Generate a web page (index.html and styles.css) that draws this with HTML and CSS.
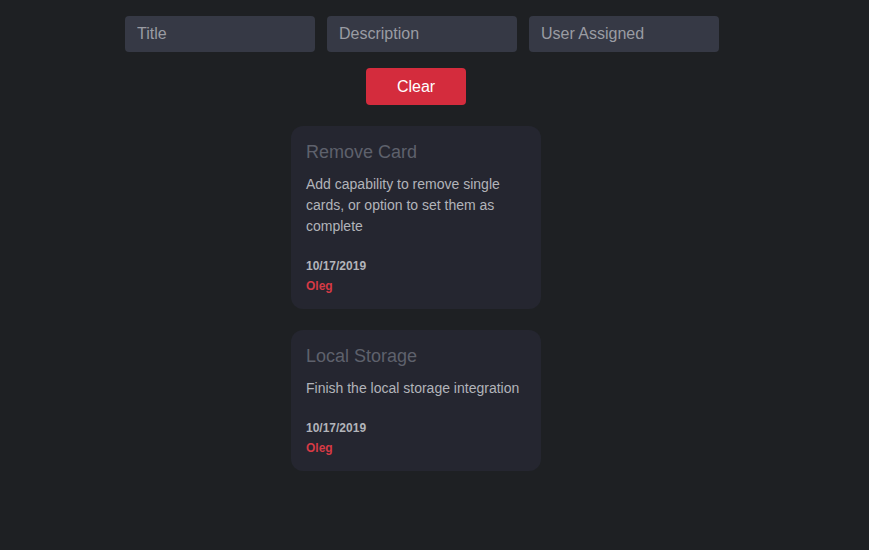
FILE: index.html
```html
<!DOCTYPE html>
<html>
<head>
<meta charset="utf-8">
<link rel="stylesheet" href="styles.css">
</head>
<body>
<div class="page">
  <form class="filters">
    <input class="field" type="text" placeholder="Title">
    <input class="field" type="text" placeholder="Description">
    <input class="field" type="text" placeholder="User Assigned">
  </form>
  <div class="actions">
    <button class="clear" type="button">Clear</button>
  </div>
  <div class="cards">
    <div class="card">
      <h2 class="card-title">Remove Card</h2>
      <p class="card-desc">Add capability to remove single cards, or option to set them as complete</p>
      <div class="card-date">10/17/2019</div>
      <div class="card-user">Oleg</div>
    </div>
    <div class="card">
      <h2 class="card-title">Local Storage</h2>
      <p class="card-desc">Finish the local storage integration</p>
      <div class="card-date">10/17/2019</div>
      <div class="card-user">Oleg</div>
    </div>
  </div>
</div>
</body>
</html>
```
FILE: styles.css
```css
html, body {
  margin: 0;
  padding: 0;
  background: #1e2023;
  height: 100%;
}
body {
  font-family: "Liberation Sans", Arial, sans-serif;
}
.page {
  padding-top: 16px;
}
.filters {
  display: flex;
  gap: 12px;
  margin: 0 0 0 125px;
}
.field {
  width: 190px;
  height: 36px;
  box-sizing: border-box;
  border: none;
  border-radius: 4px;
  background: #363945;
  padding: 0 12px;
  font-family: "Liberation Sans", Arial, sans-serif;
  font-size: 16px;
  color: #d0d2d8;
  outline: none;
}
.field::placeholder {
  color: #9a9ca3;
}
.actions {
  display: flex;
  padding-left: 366px;
  margin-top: 16px;
}
.clear {
  width: 100px;
  height: 37px;
  border: none;
  border-radius: 4px;
  background: #d42c3d;
  color: #ffffff;
  font-family: "Liberation Sans", Arial, sans-serif;
  font-size: 16px;
  padding: 0;
}
.cards {
  display: flex;
  flex-direction: column;
  gap: 21px;
  padding-left: 291px;
  margin-top: 21px;
}
.card {
  width: 250px;
  box-sizing: border-box;
  background: #252630;
  border-radius: 12px;
  padding: 14px 15px 13px;
}
.card-title {
  margin: 0;
  font-size: 18px;
  font-weight: normal;
  color: #5e616c;
  line-height: 24px;
}
.card-desc {
  margin: 10px 0 0;
  font-size: 14px;
  line-height: 21px;
  color: #b2b4ba;
}
.card-date {
  margin-top: 19px;
  font-size: 12px;
  font-weight: bold;
  line-height: 20px;
  color: #b2b4ba;
}
.card-user {
  font-size: 12px;
  font-weight: bold;
  line-height: 20px;
  color: #d53a45;
}
```
